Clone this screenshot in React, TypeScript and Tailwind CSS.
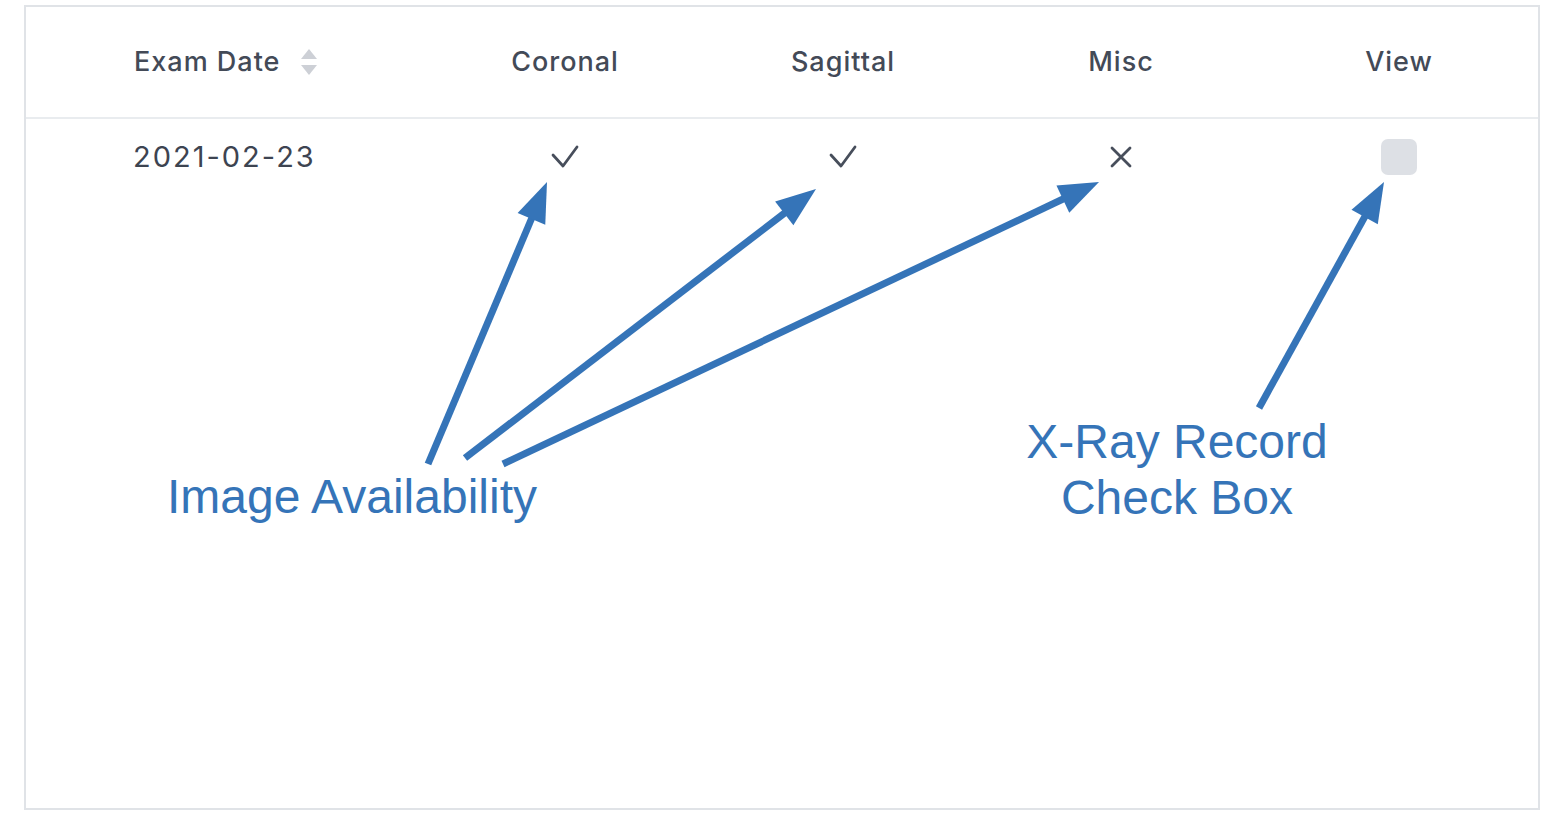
import React from "react";

const BLUE = "#3574b8";

type Arrow = { x1: number; y1: number; x2: number; y2: number };

// annotation arrows, page coordinates (tail -> tip)
const arrows: Arrow[] = [
  { x1: 428, y1: 464, x2: 547, y2: 182 },
  { x1: 465, y1: 458, x2: 816, y2: 189 },
  { x1: 503, y1: 464, x2: 1099, y2: 182 },
  { x1: 1259, y1: 408, x2: 1384, y2: 182 },
];

const ArrowShape = ({ x1, y1, x2, y2 }: Arrow) => {
  const len = Math.hypot(x2 - x1, y2 - y1);
  const dx = (x2 - x1) / len;
  const dy = (y2 - y1) / len;
  const headLen = 40;
  const half = 15;
  const bx = x2 - dx * headLen;
  const by = y2 - dy * headLen;
  const pts = `${x2},${y2} ${bx - dy * half},${by + dx * half} ${bx + dy * half},${by - dx * half}`;
  return (
    <g>
      <line x1={x1} y1={y1} x2={bx + dx * 2} y2={by + dy * 2} stroke={BLUE} strokeWidth={7} />
      <polygon points={pts} fill={BLUE} />
    </g>
  );
};

const SortIcon = () => (
  <svg width="18" height="28" viewBox="0 0 18 28" className="ml-[20px]">
    <path d="M9 1 L17 11 L1 11 Z" fill="#cdd0d6" />
    <path d="M1 17 L17 17 L9 27 Z" fill="#cdd0d6" />
  </svg>
);

const CheckMark = () => (
  <svg width="28" height="24" viewBox="0 0 28 24">
    <path d="M2 10 L12 21 L26 2" fill="none" stroke="#474e5b" strokeWidth="2.8" strokeLinecap="round" strokeLinejoin="round" />
  </svg>
);

const CrossMark = () => (
  <svg width="22" height="22" viewBox="0 0 22 22">
    <path d="M2 2 L20 20 M20 2 L2 20" fill="none" stroke="#474e5b" strokeWidth="2.8" strokeLinecap="round" />
  </svg>
);

const columns = ["Coronal", "Sagittal", "Misc", "View"];

export default function App() {
  return (
    <div className="relative w-[1562px] h-[834px] bg-white pt-[5px] pl-[24px] font-['Inter',sans-serif]">
      <div className="w-[1516px] h-[805px] border-2 border-[#e0e3e7] bg-white">
        {/* header */}
        <div className="flex h-[112px] items-center border-b-2 border-[#e9ecef] text-[#434a57] text-[27px] font-medium tracking-[1px]">
          <div className="flex-1 flex items-center pl-[108px]">
            <span>Exam Date</span>
            <SortIcon />
          </div>
          {columns.map((c) => (
            <div key={c} className="w-[278px] flex justify-center">
              {c}
            </div>
          ))}
        </div>

        {/* row */}
        <div className="flex items-start pt-[20px] text-[#3d4451]">
          <div className="flex-1 pl-[107px] text-[29px] leading-[36px] tracking-[2px]">2021-02-23</div>
          <div className="w-[278px] h-[36px] flex items-center justify-center">
            <CheckMark />
          </div>
          <div className="w-[278px] h-[36px] flex items-center justify-center">
            <CheckMark />
          </div>
          <div className="w-[278px] h-[36px] flex items-center justify-center">
            <CrossMark />
          </div>
          <div className="w-[278px] h-[36px] flex items-center justify-center">
            <div className="w-[36px] h-[36px] rounded-[7px] bg-[#dde0e5]" />
          </div>
        </div>
      </div>

      {/* annotations */}
      <svg className="absolute left-0 top-0 pointer-events-none" width="1562" height="834">
        {arrows.map((a, i) => (
          <ArrowShape key={i} {...a} />
        ))}
      </svg>
      <div className="absolute left-[167px] top-[469px] font-['Liberation_Sans',Arial,sans-serif] text-[48px] leading-[56px] text-[#3574b8]">
        Image Availability
      </div>
      <div className="absolute left-[1017px] top-[414px] w-[320px] text-center font-['Liberation_Sans',Arial,sans-serif] text-[48px] leading-[56px] text-[#3574b8]">
        X-Ray Record
        <br />
        Check Box
      </div>
    </div>
  );
}
